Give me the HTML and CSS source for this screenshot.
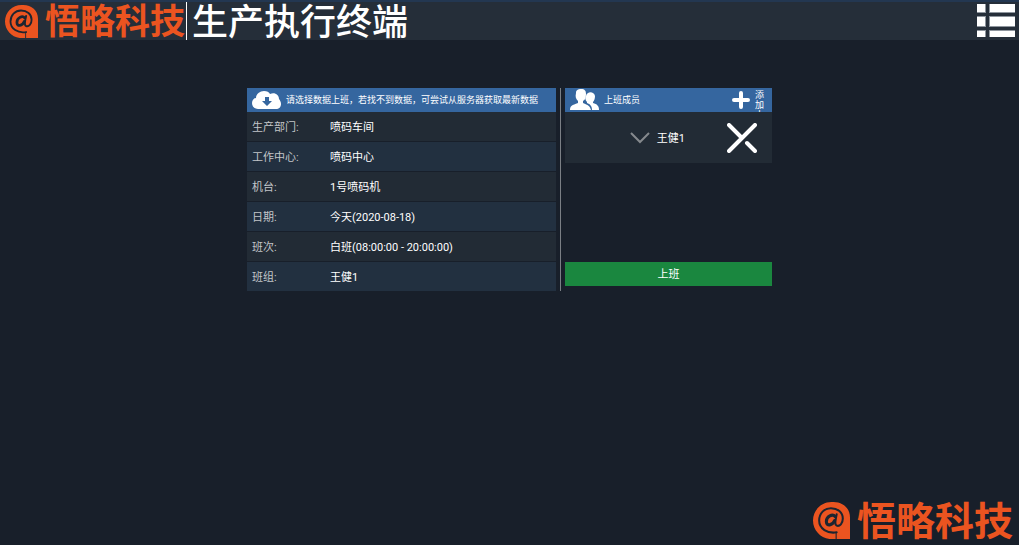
FILE: index.html
```html
<!DOCTYPE html>
<html lang="zh-CN">

<head>
    <meta charset="UTF-8">
    <meta name="viewport" content="width=device-width, initial-scale=1.0">
    <title>生产执行终端</title>
    <link rel="stylesheet" href="styles.css">
</head>

<body>

    <!-- 顶部栏 -->
    <header class="topbar">
        <div class="brand">
            <svg class="brand-mark" viewBox="0 0 36 36" aria-hidden="true">
                <path class="mark-body" d="M18 0C8 0 0 8 0 18c0 9 7 17 16 18h6v-6h1v6h13V15C36 6 29 0 20 0z"/>
                <path class="mark-line" d="M23 29.500C14 31 6 26 6 18C6 11 11 6 17.500 6C24 6 29 10 29 16C29 21 26 24 23 23C20.500 22 22 18 23 12"/>
                <path class="mark-line mark-thick" d="M21.500 14C19 11 13 14 13 19C13 24 19 23 21 18"/>
            </svg>
            <span class="brand-name">悟略科技</span>
        </div>
        <h1>生产执行终端</h1>
        <button class="menu-btn" type="button" aria-label="菜单">
            <svg viewBox="0 0 38 34" aria-hidden="true">
                <path class="menu-edge" d="M0 0h9v9H0zM12 0h26v9H12zM0 12h9v11H0zM12 12h26v11H12zM0 26h9v7H0zM12 26h26v7H12z"/>
                <path d="M0 0h8v8H0zM13 0h25v8H13zM0 13h8v9H0zM13 13h25v9H13zM0 27h8v6H0zM13 27h25v6H13z"/>
            </svg>
        </button>
    </header>

    <main class="panels">
        <!-- 班次信息 -->
        <section class="shift">
            <button class="panel-head fetch-btn" type="button">
                <svg class="icon-cloud" viewBox="0 0 29 18" aria-hidden="true">
                    <path class="icon-fill" d="M6 18C2 18 0 15 0 12c0-3 2-5 4-5C4 3 8 0 12 0c3 0 5 1 6 3c5-2 9 1 9 5c1 1 2 3 2 5c0 3-2 5-5 5z"/>
                    <path class="icon-arrow" d="M13 6h4v4h3l-5 5-5-5h3z"/>
                </svg>
                <span>请选择数据上班，若找不到数据，可尝试从服务器获取最新数据</span>
            </button>
            <table class="info">
                <tr>
                    <th scope="row">生产部门:</th>
                    <td>喷码车间</td>
                </tr>
                <tr>
                    <th scope="row">工作中心:</th>
                    <td>喷码中心</td>
                </tr>
                <tr>
                    <th scope="row">机台:</th>
                    <td>1号喷码机</td>
                </tr>
                <tr>
                    <th scope="row">日期:</th>
                    <td>今天(2020-08-18)</td>
                </tr>
                <tr>
                    <th scope="row">班次:</th>
                    <td>白班(08:00:00 - 20:00:00)</td>
                </tr>
                <tr>
                    <th scope="row">班组:</th>
                    <td>王健1</td>
                </tr>
            </table>
        </section>

        <div class="divider"></div>

        <!-- 上班成员 -->
        <section class="members">
            <div class="panel-head">
                <svg class="icon-people" viewBox="0 0 29 21" aria-hidden="true">
                    <path d="M0 21c0-4 2-5 8-7v-2C6 10 5 8 6 4c0-3 2-4 5-4c4 0 5 2 5 5c0 4-1 6-3 7v2c5 2 7 3 8 7z"/>
                    <path d="M17 13c-2-2-2-4-1-6c1-5 8-5 9 0c0 3-1 5-2 6v1c4 1 6 3 6 7h-7c0-4-2-6-5-7z"/>
                </svg>
                <h2>上班成员</h2>
                <button class="add-btn" type="button">
                    <svg class="icon-plus" viewBox="0 0 18 18" aria-hidden="true">
                        <path d="M9 2v14M2 9h14"/>
                    </svg>
                    <span>添加人</span>
                </button>
            </div>
            <div class="member">
                <button class="member-name" type="button">
                    <svg class="icon-chevron" viewBox="0 0 20 12" aria-hidden="true">
                        <path d="M1 1l9 9 9-9"/>
                    </svg>
                    <span>王健1</span>
                </button>
                <button class="remove-btn" type="button" aria-label="移除">
                    <svg viewBox="0 0 30 30" aria-hidden="true">
                        <path d="M2 2l13 13M28 2L2 28M20 20l8 8"/>
                    </svg>
                </button>
            </div>
            <button class="start-btn" type="button">上班</button>
        </section>
    </main>

    <!-- 底部标志 -->
    <footer class="footer">
        <div class="brand brand-large">
            <svg class="brand-mark" viewBox="0 0 36 36" aria-hidden="true">
                <path class="mark-body" d="M18 0C8 0 0 8 0 18c0 9 7 17 16 18h6v-6h1v6h13V15C36 6 29 0 20 0z"/>
                <path class="mark-line" d="M23 29.500C14 31 6 26 6 18C6 11 11 6 17.500 6C24 6 29 10 29 16C29 21 26 24 23 23C20.500 22 22 18 23 12"/>
                <path class="mark-line mark-thick" d="M21.500 14C19 11 13 14 13 19C13 24 19 23 21 18"/>
            </svg>
            <span class="brand-name">悟略科技</span>
        </div>
    </footer>

</body>

</html>
```
FILE: styles.css
```css
* {
    box-sizing: border-box;
}

body {
    display: flex;
    flex-direction: column;
    min-height: 100vh;
    margin: 0;
    background-color: #181f2a;
    color: #fff;
    font-family: Roboto, "Noto Sans CJK SC", sans-serif;
    font-size: 11px;
}

button {
    padding: 0;
    border: none;
    background: none;
    color: inherit;
    font: inherit;
    text-align: left;
    cursor: pointer;
}

svg {
    display: block;
    flex: none;
}

/* 顶部栏 */
.topbar {
    display: flex;
    align-items: center;
    height: 40px;
    padding: 0 4px 0 5px;
    border-top: 2px solid #233751;
    background-color: #252e39;
}

.topbar h1 {
    height: 38px;
    margin: 0 0 0 1px;
    padding: 2px 0 0 5px;
    border-left: 1px solid #fff;
    font-size: 36px;
    font-weight: 500;
    line-height: 38px;
}

.menu-btn {
    margin-left: auto;
}

.menu-btn svg {
    width: 38px;
    height: 34px;
    fill: #fff;
}

.menu-btn .menu-edge {
    fill: #8e959d;
}

/* 标志 */
.brand {
    display: flex;
    align-items: center;
    gap: 7px;
    color: #eb5420;
    font-size: 35px;
    font-weight: bold;
    line-height: 36px;
}

.brand-name {
    padding-top: 4px;
}

.brand-mark {
    width: 33px;
    height: 33px;
}

.mark-body {
    fill: #eb5420;
}

.mark-line {
    fill: none;
    stroke: #1d2530;
    stroke-width: 2;
    stroke-linecap: round;
}

.mark-thick {
    stroke-width: 3;
}

.brand-large {
    font-size: 39px;
}

.brand-large .brand-mark {
    width: 37px;
    height: 37px;
}

/* 面板 */
.panels {
    display: grid;
    grid-template-columns: 1fr 1px 207px;
    gap: 4px;
    width: 100%;
    max-width: 525px;
    margin: 48px auto 0;
}

.divider {
    background-color: #7b7f85;
}

.panel-head {
    display: flex;
    align-items: center;
    width: 100%;
    height: 24px;
    padding: 0 5px 1px;
    gap: 5px;
    background-color: #35669f;
    font-size: 9px;
}

.panel-head h2 {
    margin: 0;
    font-size: 9px;
    font-weight: normal;
}

.icon-cloud {
    width: 29px;
    height: 18px;
}

.icon-fill {
    fill: #fff;
}

.icon-arrow {
    fill: #35669f;
}

.icon-people {
    width: 29px;
    height: 21px;
    fill: #fff;
}

.info {
    width: 100%;
    border-spacing: 0;
}

.info th,
.info td {
    height: 30px;
    padding: 0 5px 2px;
    border-bottom: 1px solid #181f2a;
    background-color: #222b35;
    text-align: left;
    font-weight: normal;
}

.info th {
    width: 78px;
    color: #c3c6c9;
}

.info tr:nth-child(even) th,
.info tr:nth-child(even) td {
    background-color: #223040;
}

.info tr:last-child th,
.info tr:last-child td {
    height: 29px;
    border-bottom: none;
}

/* 成员 */
.members {
    display: flex;
    flex-direction: column;
    padding-bottom: 5px;
}

.add-btn {
    display: flex;
    align-items: center;
    gap: 5px;
    height: 24px;
    margin-left: auto;
    overflow: hidden;
}

.add-btn span {
    align-self: flex-start;
    width: 12px;
    padding-top: 2px;
    line-height: 10px;
}

.icon-plus {
    width: 18px;
    height: 18px;
    fill: none;
    stroke: #fff;
    stroke-width: 4;
    stroke-linecap: round;
}

.member {
    display: flex;
    align-items: center;
    justify-content: flex-end;
    gap: 42px;
    height: 51px;
    padding-right: 15px;
    background-color: #222b35;
}

.member-name {
    display: flex;
    align-items: center;
    gap: 7px;
}

.member-name span {
    padding-bottom: 2px;
}

.icon-chevron {
    width: 20px;
    height: 12px;
    fill: none;
    stroke: #85898d;
    stroke-width: 2;
}

.remove-btn svg {
    width: 30px;
    height: 30px;
    fill: none;
    stroke: #fff;
    stroke-width: 4;
    stroke-linecap: round;
}

.start-btn {
    height: 24px;
    margin-top: auto;
    padding-bottom: 2px;
    background-color: #1a873f;
    text-align: center;
}

/* 底部 */
.footer {
    display: flex;
    justify-content: flex-end;
    margin-top: auto;
    padding: 0 6px 5px;
}
```
